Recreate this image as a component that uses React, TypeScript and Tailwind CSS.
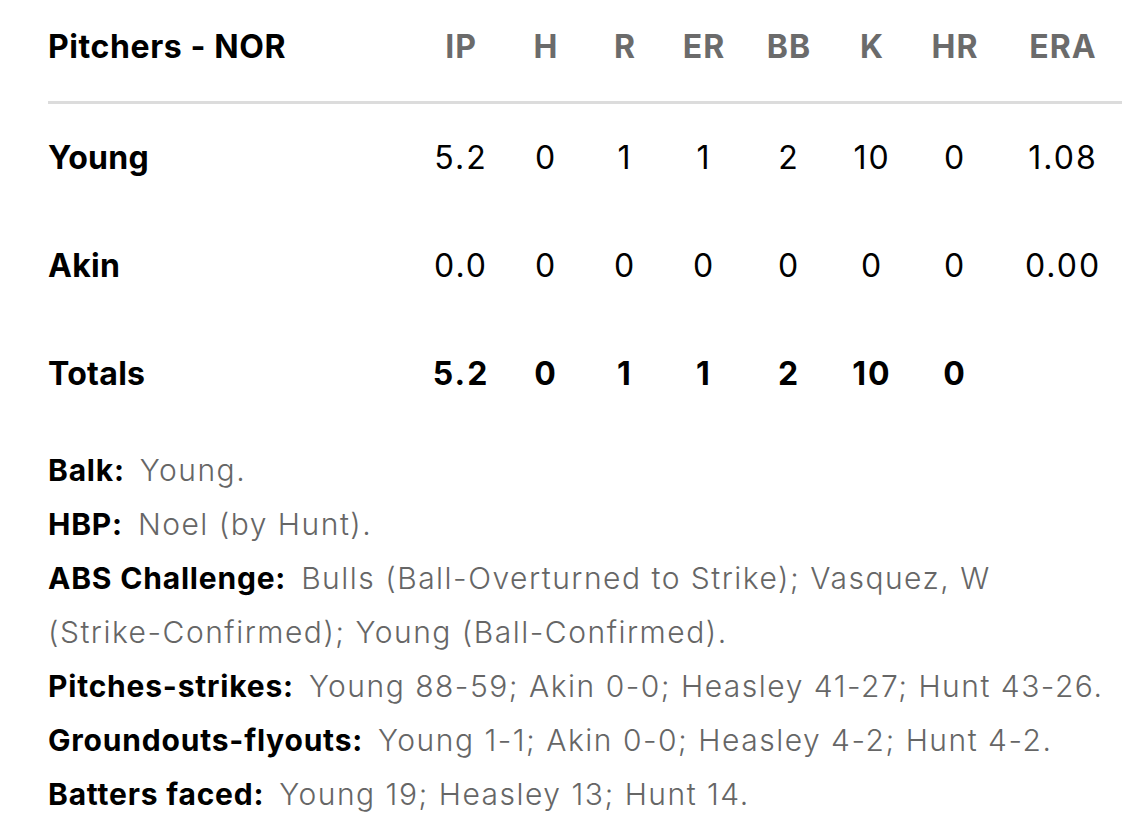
import React from "react";

const cols = [
  { key: "IP", w: "w-[86px]" },
  { key: "H", w: "w-[84px]" },
  { key: "R", w: "w-[74px]" },
  { key: "ER", w: "w-[84px]" },
  { key: "BB", w: "w-[86px]" },
  { key: "K", w: "w-[80px]" },
  { key: "HR", w: "w-[86px]" },
  { key: "ERA", w: "w-[130px]" },
];

const rows = [
  { name: "Young", vals: ["5.2", "0", "1", "1", "2", "10", "0", "1.08"], bold: false },
  { name: "Akin", vals: ["0.0", "0", "0", "0", "0", "0", "0", "0.00"], bold: false },
  { name: "Totals", vals: ["5.2", "0", "1", "1", "2", "10", "0", ""], bold: true },
];

function Note({ label, children }: { label: string; children: React.ReactNode }) {
  return (
    <div>
      <span className="mr-[15px] font-bold tracking-[0.8px] text-black">{label}</span>
      <span className="font-light tracking-[1.5px] text-[#666666]">{children}</span>
    </div>
  );
}

export default function App() {
  return (
    <div
      className="w-[1132px] h-[826px] overflow-hidden bg-white pl-[48px] text-black"
      style={{ fontFamily: "Inter, 'Liberation Sans', sans-serif" }}
    >
      <div className="flex h-[94px] items-center text-[32px] font-bold">
        <div className="w-[370px] shrink-0 tracking-[0.6px] text-black">Pitchers - NOR</div>
        {cols.map((c) => (
          <div key={c.key} className={`${c.w} shrink-0 text-center tracking-[1px] text-[#6b6b6b]`}>
            {c.key}
          </div>
        ))}
      </div>
      <div className="mt-[7px] h-[3px] w-[1074px] bg-[#dcdcdc]" />
      {rows.map((r) => (
        <div key={r.name} className="flex h-[108px] items-center text-[32px]">
          <div className="w-[370px] shrink-0 font-bold tracking-[0.3px]">{r.name}</div>
          {r.vals.map((v, i) => (
            <div
              key={i}
              className={`${cols[i].w} shrink-0 text-center tracking-[2px] ${r.bold ? "font-bold" : "font-normal"}`}
            >
              {v}
            </div>
          ))}
        </div>
      ))}
      <div className="mt-[15px] text-[30px] leading-[54px] whitespace-nowrap">
        <Note label="Balk:">Young.</Note>
        <Note label="HBP:">Noel (by Hunt).</Note>
        <Note label="ABS Challenge:">Bulls (Ball-Overturned to Strike); Vasquez, W</Note>
        <div className="font-light tracking-[1.5px] text-[#666666]">
          (Strike-Confirmed); Young (Ball-Confirmed).
        </div>
        <Note label="Pitches-strikes:">Young 88-59; Akin 0-0; Heasley 41-27; Hunt 43-26.</Note>
        <Note label="Groundouts-flyouts:">Young 1-1; Akin 0-0; Heasley 4-2; Hunt 4-2.</Note>
        <Note label="Batters faced:">Young 19; Heasley 13; Hunt 14.</Note>
      </div>
    </div>
  );
}
